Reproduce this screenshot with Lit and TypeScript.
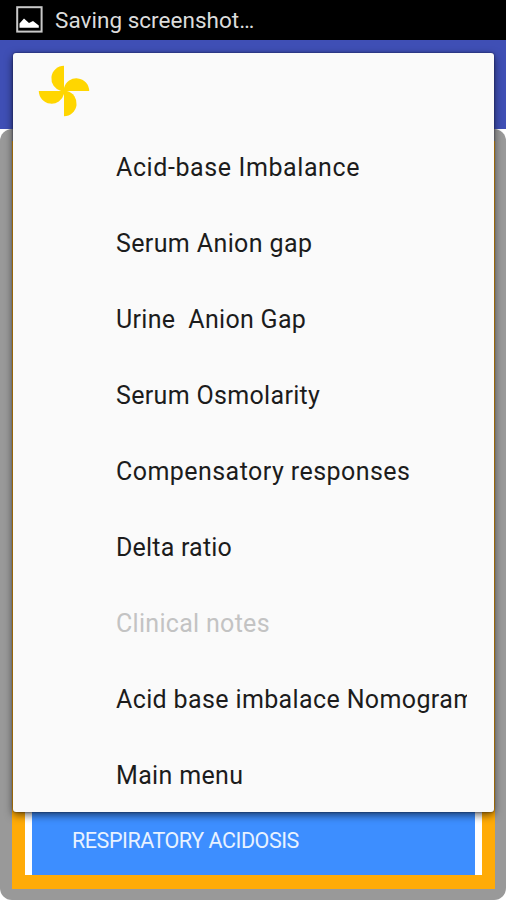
import { LitElement, html, css } from "lit";
import { customElement, property } from "lit/decorators.js";
import { classMap } from "lit/directives/class-map.js";

interface Entry {
  label: string;
  spacing: number;
  disabled?: boolean;
}

const ENTRIES: Entry[] = [
  { label: "Acid-base Imbalance", spacing: 0.6 },
  { label: "Serum Anion gap", spacing: 0.38 },
  { label: "Urine  Anion Gap", spacing: 0.3 },
  { label: "Serum Osmolarity", spacing: 0.33 },
  { label: "Compensatory responses", spacing: 0.45 },
  { label: "Delta ratio", spacing: 0.2 },
  { label: "Clinical notes", spacing: 0.3, disabled: true },
  { label: "Acid base imbalace Nomogram", spacing: 0.37 },
  { label: "Main menu", spacing: 0.34 },
];

@customElement("status-bar")
class StatusBar extends LitElement {
  static styles = css`
    :host {
      display: flex;
      align-items: center;
      height: 40px;
      padding-left: 16px;
      background: #000;
      color: #dcdcdc;
      font-size: 22.5px;
    }
    svg {
      width: 27px;
      height: 27px;
      margin: 0 12px 2px 0;
    }
    .text {
      line-height: 40px;
      letter-spacing: 0.03px;
    }
  `;
  render() {
    return html`
      <svg viewBox="0 0 27 27">
        <rect x="1.2" y="1.2" width="24.4" height="24.4" fill="none" stroke="#c9c9c9" stroke-width="2" />
        <path d="M3.500 21.800V17.500L8 12.600L13 17L17 15L22.800 19.500V21.800Z" fill="#fff" />
      </svg>
      <span class="text">Saving screenshot…</span>
    `;
  }
}

@customElement("popup-menu")
class PopupMenu extends LitElement {
  @property({ attribute: false }) entries: Entry[] = [];
  static styles = css`
    :host {
      display: grid;
      grid-template-columns: minmax(0, 1fr);
      grid-template-rows: repeat(10, 1fr);
      width: 481px;
      height: 759px;
      background: #fafafa;
      border-radius: 3px;
      box-shadow: 0 3px 8px rgba(0, 0, 0, 0.6), 0 0 2px rgba(0, 0, 40, 0.7);
    }
    .row {
      display: flex;
      align-items: center;
      min-height: 0;
      padding: 0 27px 0 103px;
    }
    .head {
      padding-left: 25px;
    }
    .head svg {
      width: 52px;
      height: 52px;
    }
    .label {
      flex: 1;
      min-width: 0;
      overflow: hidden;
      padding-top: 3px;
      white-space: pre;
      color: #1c1c1c;
      font-size: 25px;
      line-height: 36px;
    }
    .disabled {
      color: #c3c3c3;
    }
  `;
  render() {
    return html`
      <div class="row head">
        <svg viewBox="0 0 52 52" fill="#ffd600">
          <path d="M26 26.500V0.800A12.800 12.800 0 0 0 23 26Z" />
          <path d="M25.500 26H51.200A12.800 12.800 0 0 0 26 23Z" />
          <path d="M26 25.500V51.200A12.800 12.800 0 0 0 29 26Z" />
          <path d="M26.500 26H0.800A12.800 12.800 0 0 0 26 29Z" />
        </svg>
      </div>
      ${this.entries.map(
        (e) => html`<div class="row">
          <span class=${classMap({ label: true, disabled: !!e.disabled })} style="letter-spacing:${e.spacing}px">${e.label}</span>
        </div>`
      )}
    `;
  }
}

@customElement("app-root")
class AppRoot extends LitElement {
  static styles = css`
    :host {
      display: flex;
      flex-direction: column;
      position: relative;
      width: 506px;
      height: 900px;
      overflow: hidden;
      background: #fff;
      font-family: Roboto, sans-serif;
    }
    .toolbar {
      height: 89px;
      background: #3f4fb5;
    }
    .frame {
      flex: 1;
      display: flex;
      box-sizing: border-box;
      padding: 12px 11px 11px 12px;
      background: #999;
      border-radius: 12px;
    }
    .panel {
      flex: 1;
      display: flex;
      padding: 13px 13px 14px;
      background: #ffab07;
    }
    .sheet {
      flex: 1;
      display: flex;
      flex-direction: column;
      justify-content: flex-end;
      padding: 0 7px;
      background: #fff;
    }
    .item {
      height: 70px;
      padding-left: 40px;
      background: #3d8eff;
      color: #e8f2ff;
      font-size: 21.5px;
      letter-spacing: -0.45px;
      line-height: 71px;
      white-space: nowrap;
    }
    popup-menu {
      position: absolute;
      left: 13px;
      top: 53px;
    }
  `;
  render() {
    return html`
      <status-bar></status-bar>
      <div class="toolbar"></div>
      <div class="frame">
        <div class="panel">
          <div class="sheet"><div class="item">RESPIRATORY ACIDOSIS</div></div>
        </div>
      </div>
      <popup-menu .entries=${ENTRIES}></popup-menu>
    `;
  }
}
